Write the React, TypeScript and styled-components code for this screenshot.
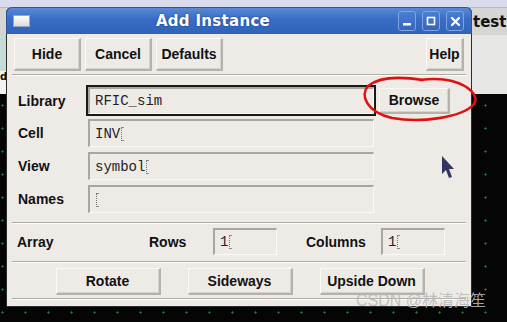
import styled, { createGlobalStyle } from "styled-components";

const GlobalStyle = createGlobalStyle`
  html, body { margin: 0; padding: 0; background: #000; }
  body { font-family: "DejaVu Sans", "Liberation Sans", sans-serif; }
`;

const Desktop = styled.div`
  position: relative;
  width: 507px;
  height: 322px;
  overflow: hidden;
  background-color: #050505;
  background-image: radial-gradient(circle, #1f7a3a 0.9px, transparent 1.3px);
  background-size: 23px 23px;
  background-position: 474px 2px;
`;

// windows behind the dialog
const BackWindow = styled.div`
  position: absolute;
  left: 0;
  top: 0;
  width: 507px;
  display: flex;
  flex-direction: column;
`;

const Band = styled.div<{ $h: number; $left: string; $right: string }>`
  height: ${(p) => p.$h}px;
  background: linear-gradient(90deg, ${(p) => p.$left} 0 472px, ${(p) => p.$right} 472px);
`;

const BackBar = styled.div`
  height: 27px;
  background: #d5d5d3;
  border-top: 1px solid #b8b8c0;
  display: flex;
  align-items: center;
  justify-content: flex-end;
  font: bold 15px "DejaVu Sans", sans-serif;
  color: #111;
  span { width: 34px; white-space: nowrap; }
`;

const StubLetter = styled.div`
  font: bold 10px "DejaVu Sans", sans-serif;
  color: #111;
  line-height: 12px;
  width: 6px;
`;

const Dialog = styled.div`
  position: absolute;
  left: 6px;
  top: 7px;
  width: 466px;
  height: 300px;
  box-sizing: border-box;
  background: #eeebe7;
  border: 1px solid #2c2c2c;
  border-top: none;
  border-radius: 6px 6px 0 0;
  display: flex;
  flex-direction: column;
`;

const TitleBar = styled.div`
  height: 26px;
  flex: none;
  border-radius: 6px 6px 0 0;
  background: linear-gradient(#5a8ad6, #3a6ec6 40%, #2f62b8);
  border: 1px solid #2a54a0;
  border-bottom: none;
  margin: 0 -1px;
  display: flex;
  align-items: center;
  padding: 0 6px;
  position: relative;
`;

const WinIcon = styled.div`
  width: 15px;
  height: 10px;
  background: linear-gradient(#ffffff, #dcdcdc);
  border: 1px solid #98a8c4;
`;

const Title = styled.div`
  position: absolute;
  left: 0;
  right: 0;
  text-align: center;
  padding-right: 52px;
  font: bold 15px "DejaVu Sans", sans-serif;
  letter-spacing: 0.3px;
  color: #fff;
  text-shadow: 0 0 2px #1d3c78;
  pointer-events: none;
`;

const WinButtons = styled.div`
  margin-left: auto;
  display: flex;
  gap: 6px;
  margin-right: 1px;
`;

const WinButton = styled.div`
  width: 16px;
  height: 18px;
  border: 1px solid #7fa4e2;
  border-radius: 3px;
  background: linear-gradient(#4a7ed2, #3565bc);
  display: flex;
  align-items: center;
  justify-content: center;
  color: #fff;
`;

const Body = styled.div`
  flex: 1;
  display: flex;
  flex-direction: column;
  padding: 0 5px;
  font: bold 14px "Liberation Sans", Arial, sans-serif;
  color: #111;
`;

const Toolbar = styled.div`
  display: flex;
  gap: 4px;
  margin-top: 4px;
  padding: 0 2px;
`;

const RaisedButton = styled.div<{ $w: number; $h: number }>`
  width: ${(p) => p.$w}px;
  height: ${(p) => p.$h}px;
  box-sizing: border-box;
  display: flex;
  align-items: center;
  justify-content: center;
  background: #eeebe7;
  border-top: 1px solid #fbfaf8;
  border-left: 1px solid #fbfaf8;
  border-right: 2px solid #b5b2ad;
  border-bottom: 2px solid #b5b2ad;
  box-shadow: inset -1px -1px 0 #d6d3ce;
  font: bold 14px "Liberation Sans", Arial, sans-serif;
  color: #111;
`;

const HelpButton = styled(RaisedButton)`
  margin-left: auto;
`;

const Separator = styled.div<{ $top: number; $bottom: number }>`
  height: 0;
  border-top: 1px solid #b0ada8;
  border-bottom: 1px solid #fdfcfa;
  margin: ${(p) => p.$top}px 0 ${(p) => p.$bottom}px;
`;

const Form = styled.div`
  display: flex;
  flex-direction: column;
  gap: 5px;
`;

const FieldRow = styled.div<{ $h: number }>`
  height: ${(p) => p.$h}px;
  display: flex;
  align-items: center;
`;

const Label = styled.div`
  width: 70px;
  padding-left: 6px;
  flex: none;
`;

const Field = styled.div<{ $w: number; $h?: number; $focus?: boolean }>`
  width: ${(p) => p.$w}px;
  height: ${(p) => p.$h ?? 28}px;
  box-sizing: border-box;
  flex: none;
  display: flex;
  align-items: center;
  padding-left: 5px;
  background: #eeebe7;
  border-top: 2px solid #a9a6a1;
  border-left: 2px solid #a9a6a1;
  border-right: 1px solid #fbfaf8;
  border-bottom: 1px solid #fbfaf8;
  box-shadow: ${(p) => (p.$focus ? "0 0 0 2px #1a1a1a" : "none")};
  font: 14px "Liberation Mono", "Courier New", monospace;
  color: #222;
`;

const Caret = styled.span`
  display: inline-block;
  width: 3px;
  height: 14px;
  border-left: 1px dotted #555;
  border-top: 1px solid #777;
  border-bottom: 1px solid #777;
  box-sizing: border-box;
  transform: translateX(1px);
  opacity: 0.8;
`;

const BrowseButton = styled(RaisedButton)`
  margin-left: 5px;
`;

const ArrayRow = styled.div`
  display: grid;
  grid-template-columns: 137px 64px 64px 104px 64px;
  align-items: center;
  height: 27px;
`;

const ArrayLabel = styled.div<{ $pad?: number }>`
  padding-left: ${(p) => p.$pad ?? 0}px;
`;

const ActionRow = styled.div`
  display: flex;
  justify-content: center;
  gap: 27px;
  padding-left: 2px;
`;

const Overlay = styled.svg`
  position: absolute;
  left: 0;
  top: 0;
  pointer-events: none;
`;

const Watermark = styled.div`
  position: absolute;
  left: 356px;
  top: 287px;
  font: 16px "Liberation Sans", "Noto Sans CJK SC", sans-serif;
  color: rgba(185, 185, 185, 0.9);
  white-space: nowrap;
`;

export default function App() {
  return (
    <Desktop>
      <GlobalStyle />
      <BackWindow>
        <Band $h={7} $left="#dadbec" $right="#dadbec" />
        <BackBar>
          <span>test</span>
        </BackBar>
        <Band $h={36} $left="#c6dbd6" $right="#e6e7e4" />
        <Band $h={23} $left="#f2f2f0" $right="#e6e7e4">
          <StubLetter>d</StubLetter>
        </Band>
      </BackWindow>

      <Dialog>
        <TitleBar>
          <WinIcon />
          <Title>Add Instance</Title>
          <WinButtons>
            <WinButton>
              <svg width="10" height="10" viewBox="0 0 10 10">
                <rect x="1" y="7" width="8" height="2.5" fill="#fff" />
              </svg>
            </WinButton>
            <WinButton>
              <svg width="10" height="10" viewBox="0 0 10 10">
                <rect x="1.5" y="1.5" width="7" height="7" fill="none" stroke="#fff" strokeWidth="1.6" />
              </svg>
            </WinButton>
            <WinButton>
              <svg width="11" height="11" viewBox="0 0 11 11">
                <path d="M2 2 L9 9 M9 2 L2 9" stroke="#fff" strokeWidth="2.2" strokeLinecap="round" />
              </svg>
            </WinButton>
          </WinButtons>
        </TitleBar>

        <Body>
          <Toolbar>
            <RaisedButton $w={67} $h={33}>Hide</RaisedButton>
            <RaisedButton $w={67} $h={33}>Cancel</RaisedButton>
            <RaisedButton $w={67} $h={33}>Defaults</RaisedButton>
            <HelpButton $w={38} $h={33}>Help</HelpButton>
          </Toolbar>

          <Separator $top={3} $bottom={11} />

          <Form>
            <FieldRow $h={27}>
              <Label>Library</Label>
              <Field $w={286} $h={27} $focus>
                RFIC_sim
              </Field>
              <BrowseButton $w={71} $h={26}>Browse</BrowseButton>
            </FieldRow>
            <FieldRow $h={28}>
              <Label>Cell</Label>
              <Field $w={286}>
                INV<Caret />
              </Field>
            </FieldRow>
            <FieldRow $h={28}>
              <Label>View</Label>
              <Field $w={286}>
                symbol<Caret />
              </Field>
            </FieldRow>
            <FieldRow $h={28}>
              <Label>Names</Label>
              <Field $w={286}>
                <Caret />
              </Field>
            </FieldRow>
          </Form>

          <Separator $top={9} $bottom={4} />

          <ArrayRow>
            <ArrayLabel $pad={5}>Array</ArrayLabel>
            <ArrayLabel>Rows</ArrayLabel>
            <Field $w={64} $h={27}>
              1<Caret />
            </Field>
            <ArrayLabel $pad={29}>Columns</ArrayLabel>
            <Field $w={64} $h={27}>
              1<Caret />
            </Field>
          </ArrayRow>

          <Separator $top={6} $bottom={5} />

          <ActionRow>
            <RaisedButton $w={105} $h={27}>Rotate</RaisedButton>
            <RaisedButton $w={105} $h={27}>Sideways</RaisedButton>
            <RaisedButton $w={105} $h={27}>Upside Down</RaisedButton>
          </ActionRow>

          <Separator $top={3} $bottom={0} />
        </Body>
      </Dialog>

      <Overlay width="507" height="322" viewBox="0 0 507 322">
        {/* hand drawn circle round Browse */}
        <path
          d="M423 80 C 404 77, 380 76, 368 86 C 360 95, 366 112, 392 118 C 420 123, 462 118, 474 104 C 479 96, 470 86, 452 81 C 440 78, 428 79, 420 80"
          fill="none"
          stroke="#e01010"
          strokeWidth="2.6"
          strokeLinecap="round"
        />
        {/* mouse pointer */}
        <path d="M442 156 L442 174 L446 170 L449 178 L452 177 L449 169 L454 169 Z" fill="#1d2150" opacity="0.9" />
      </Overlay>

      <Watermark>CSDN @林清海笙</Watermark>
    </Desktop>
  );
}
